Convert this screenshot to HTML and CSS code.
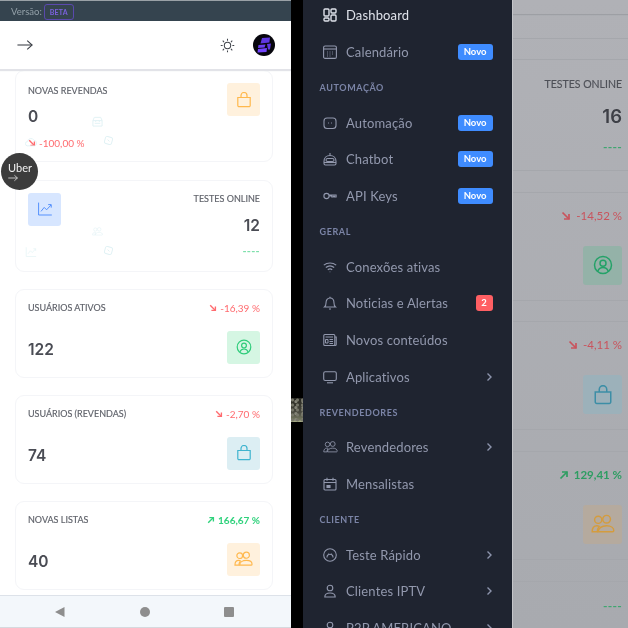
FILE: index.html
```html
<!DOCTYPE html>
<html lang="pt-BR">
<head>
<meta charset="utf-8">
<title>Dashboard</title>
<link rel="stylesheet" href="styles.css">
</head>
<body>
<svg class="defs" xmlns="http://www.w3.org/2000/svg">
  <symbol id="i-bag" viewBox="0 0 16 16"><path d="M1.800 5.500h12.400v8a1.200 1.200 0 0 1-1.200 1.200H3a1.200 1.200 0 0 1-1.200-1.200z"/><path d="M5 5.500V3.500a3 3 0 0 1 6 0v2"/></symbol>
  <symbol id="i-chart" viewBox="0 0 20 20"><path d="M2 2v15.500h16.500"/><path d="M5 13l4-5 3 3 5.500-6"/><path d="M14 4.500h3.800v3.800"/></symbol>
  <symbol id="i-usercircle" viewBox="0 0 16 16"><circle cx="8" cy="8" r="6.800"/><circle cx="8" cy="6.600" r="2.400"/><path d="M3.800 13c.8-2 2.400-3 4.200-3s3.400 1 4.200 3"/></symbol>
  <symbol id="i-users" viewBox="0 0 20 16"><circle cx="6" cy="4.500" r="3"/><circle cx="13" cy="4" r="3.200"/><path d="M1 14.500c0-3 1.500-5 4-5 .8 0 1.300.2 1.800.5-1 1.200-1.500 2.700-1.500 4.500z"/><path d="M6 14.500c0-3 3-5 7-5s6 2 6 4c0 .6-.4 1-1 1z"/></symbol>
  <symbol id="i-dash" viewBox="0 0 14 14"><rect x="1" y="1" width="5" height="7" rx="1"/><rect x="8" y="1" width="5" height="4" rx="1"/><rect x="1" y="10" width="5" height="3" rx="1"/><rect x="8" y="7" width="5" height="6" rx="1"/></symbol>
  <symbol id="i-cal" viewBox="0 0 14 14"><rect x=".6" y="1" width="12.800" height="12.400" rx="1.500"/><path d="M.6 4h12.800"/><path d="M4 7h.8M6.600 7h.8M9.200 7h.8M4 9h.8M6.600 9h.8M9.200 9h.8M4 11h.8M6.600 11h.8" stroke-width="1.200"/></symbol>
  <symbol id="i-bot" viewBox="0 0 14 14"><rect x="1" y="2" width="12" height="10.500" rx="3"/><path d="M5 7h.6M8.400 7h.6" stroke-width="1.500"/></symbol>
  <symbol id="i-chatbot" viewBox="0 0 14 14"><path d="M7 1v2"/><path d="M1 9.500C1 6 3.500 3.500 7 3.500s6 2.500 6 6v2a1.500 1.500 0 0 1-1.500 1.500h-9A1.500 1.500 0 0 1 1 11.500z"/><rect x="3" y="6.500" width="8" height="3" rx="1.500"/><path d="M1 10.500h12"/></symbol>
  <symbol id="i-key" viewBox="0 0 14 14"><circle cx="3.500" cy="7" r="2.600"/><path d="M6.100 6h7v2H11.500v-.8h-1.200V8H8.800v-1H6.100"/></symbol>
  <symbol id="i-wifi" viewBox="0 0 14 14"><path d="M.8 5.200C4.400 2.200 9.600 2.200 13.200 5.200"/><path d="M2.800 7.500c2.500-2 5.900-2 8.400 0"/><path d="M4.800 9.700c1.300-1 3.100-1 4.400 0"/><path d="M6.800 11.800h.4" stroke-width="1.500"/></symbol>
  <symbol id="i-bell" viewBox="0 0 14 14"><path d="M1.500 11c1-.8 1.500-2 1.500-4 0-3 1.500-5 4-5s4 2 4 5c0 2 .5 3.200 1.500 4z"/><path d="M6 13h2"/><path d="M7 .8v1.200"/></symbol>
  <symbol id="i-news" viewBox="0 0 14 14"><rect x=".8" y="1.500" width="11" height="11" rx="1"/><path d="M11.800 4h1.400v7.500a1 1 0 0 1-1 1h-1"/><path d="M2.500 4h7.500M2.500 6.500h2.500v3.500H2.500zM6.500 6.500H10M6.500 8.500H10M6.500 10.500H10" stroke-width="1"/></symbol>
  <symbol id="i-tv" viewBox="0 0 14 14"><rect x=".7" y="1.800" width="12.600" height="8.700" rx="1.500"/><path d="M4 12.800h6"/></symbol>
  <symbol id="i-cal2" viewBox="0 0 14 14"><rect x="1" y="2.500" width="12" height="10.500" rx="1"/><path d="M1 5.500h12M4 .8v3M10 .8v3"/><path d="M4 8.500h3v2H4z" fill="currentColor"/></symbol>
  <symbol id="i-smile" viewBox="0 0 14 14"><circle cx="7" cy="7" r="6.300"/><path d="M4 9.500c0-2 1.300-3.200 3-3.200s3 1.200 3 3.200"/><path d="M5 5.500h.4M8.600 5.500H9" stroke-width="1.200"/></symbol>
  <symbol id="i-user" viewBox="0 0 14 14"><circle cx="7" cy="4" r="2.800"/><path d="M1.800 13c0-2.800 2-4 5.200-4s5.200 1.200 5.200 4z"/></symbol>
  <symbol id="i-chev" viewBox="0 0 8 10"><path d="M2.500 1.500L6 5 2.500 8.500"/></symbol>
  <symbol id="i-down" viewBox="0 0 10 10"><path d="M1.500 1.500l6.500 6.500"/><path d="M8 3v5H3"/></symbol>
  <symbol id="i-up" viewBox="0 0 10 10"><path d="M1.500 8.500L8 2"/><path d="M3 2h5v5"/></symbol>
  <symbol id="i-arrow" viewBox="0 0 18 12"><path d="M.5 6h16.500"/><path d="M11.500 1l5.500 5-5.500 5"/></symbol>
  <symbol id="i-sun" viewBox="0 0 16 16"><circle cx="8" cy="8" r="3.400"/><path d="M8 .8v2M8 13.200v2M.8 8h2M13.200 8h2M2.900 2.900l1.400 1.400M11.700 11.700l1.400 1.400M2.900 13.100l1.400-1.400M11.700 4.300l1.400-1.400"/></symbol>
  <symbol id="i-shop" viewBox="0 0 12 12"><path d="M1 5l1.500-3.500h7L11 5v6H1z"/><path d="M1 5h10M4 5v1.500M8 5v1.500M3 8h6"/></symbol>
  <symbol id="i-cloud" viewBox="0 0 14 12"><path d="M3 10.500a2.500 2.500 0 0 1 0-5A4 4 0 0 1 10.500 4a3.300 3.300 0 0 1 .5 6.500z"/></symbol>
  <symbol id="i-puzzle" viewBox="0 0 12 12"><rect x="2" y="2" width="8" height="8" rx="2" transform="rotate(15 6 6)"/><path d="M5 5l2 2"/></symbol>
</svg>

<div class="screen">
  <section class="phone">
    <div class="status">
      <span class="status-version">Versão:</span>
      <span class="beta">BETA</span>
    </div>
    <header class="topbar">
      <svg class="topbar-arrow"><use href="#i-arrow"/></svg>
      <div class="topbar-right">
        <svg class="sun"><use href="#i-sun"/></svg>
        <svg class="avatar" viewBox="0 0 22 22"><circle cx="11" cy="11" r="11" fill="#07060d"/><path d="M9 4l8-.5-.6 5-8.900 1z" fill="#5f37e0"/><path d="M5.500 11l7-.5-.9 3-6.600.5z" fill="#6a3df0"/><path d="M5 15l9-1-.5 4-9 .5z" fill="#7344ff"/><path d="M14 10l4-.5-1 6-2 0z" fill="#5f37e0"/></svg>
      </div>
    </header>

    <main class="cards">
      <article class="card card-a">
        <div class="stack">
          <h3 class="label">Novas Revendas</h3>
          <div class="value value-mid">0</div>
          <div class="delta down"><svg class="delta-icon"><use href="#i-down"/></svg>-100,00 %</div>
        </div>
        <div class="box box-orange"><svg class="box-icon"><use href="#i-bag"/></svg></div>
        <svg class="ghost ghost-shop"><use href="#i-shop"/></svg>
        <svg class="ghost ghost-right"><use href="#i-puzzle"/></svg>
        <svg class="ghost ghost-left"><use href="#i-cloud"/></svg>
      </article>

      <article class="card card-b">
        <div class="box box-blue"><svg class="box-icon"><use href="#i-chart"/></svg></div>
        <div class="stack stack-end">
          <h3 class="label">Testes Online</h3>
          <div class="value value-mid">12</div>
          <div class="dashes">----</div>
        </div>
        <svg class="ghost ghost-shop"><use href="#i-users"/></svg>
        <svg class="ghost ghost-right"><use href="#i-puzzle"/></svg>
        <svg class="ghost ghost-left"><use href="#i-chart"/></svg>
      </article>

      <article class="card card-c">
        <div class="row">
          <h3 class="label">Usuários Ativos</h3>
          <div class="delta down"><svg class="delta-icon"><use href="#i-down"/></svg>-16,39 %</div>
        </div>
        <div class="row row-end">
          <div class="value">122</div>
          <div class="box box-green"><svg class="box-icon"><use href="#i-usercircle"/></svg></div>
        </div>
      </article>

      <article class="card card-c">
        <div class="row">
          <h3 class="label">Usuários (Revendas)</h3>
          <div class="delta down"><svg class="delta-icon"><use href="#i-down"/></svg>-2,70 %</div>
        </div>
        <div class="row row-end">
          <div class="value">74</div>
          <div class="box box-teal"><svg class="box-icon"><use href="#i-bag"/></svg></div>
        </div>
      </article>

      <article class="card card-c">
        <div class="row">
          <h3 class="label">Novas Listas</h3>
          <div class="delta up"><svg class="delta-icon"><use href="#i-up"/></svg>166,67 %</div>
        </div>
        <div class="row row-end">
          <div class="value">40</div>
          <div class="box box-orange"><svg class="box-icon box-icon-wide"><use href="#i-users"/></svg></div>
        </div>
      </article>
    </main>

    <nav class="softkeys">
      <svg class="softkey" viewBox="0 0 12 12"><path d="M10.500 1v10L1 6z"/></svg>
      <svg class="softkey" viewBox="0 0 12 12"><circle cx="6" cy="6" r="5"/></svg>
      <svg class="softkey" viewBox="0 0 12 12"><rect x="1" y="1" width="10" height="10" rx="1"/></svg>
    </nav>

    <div class="bubble">
      <span>Uber</span>
      <svg class="bubble-arrow"><use href="#i-arrow"/></svg>
    </div>
  </section>

  <div class="gap"><div class="gap-photo"></div></div>

  <aside class="sidebar">
    <a class="item item-active"><svg class="item-icon"><use href="#i-dash"/></svg><span class="item-text">Dashboard</span></a>
    <a class="item"><svg class="item-icon"><use href="#i-cal"/></svg><span class="item-text">Calendário</span><span class="tag">Novo</span></a>
    <div class="section">Automação</div>
    <a class="item"><svg class="item-icon"><use href="#i-bot"/></svg><span class="item-text">Automação</span><span class="tag">Novo</span></a>
    <a class="item"><svg class="item-icon"><use href="#i-chatbot"/></svg><span class="item-text">Chatbot</span><span class="tag">Novo</span></a>
    <a class="item"><svg class="item-icon"><use href="#i-key"/></svg><span class="item-text">API Keys</span><span class="tag">Novo</span></a>
    <div class="section">Geral</div>
    <a class="item"><svg class="item-icon"><use href="#i-wifi"/></svg><span class="item-text">Conexões ativas</span></a>
    <a class="item"><svg class="item-icon"><use href="#i-bell"/></svg><span class="item-text">Noticias e Alertas</span><span class="tag tag-red">2</span></a>
    <a class="item"><svg class="item-icon"><use href="#i-news"/></svg><span class="item-text">Novos conteúdos</span></a>
    <a class="item"><svg class="item-icon"><use href="#i-tv"/></svg><span class="item-text">Aplicativos</span><svg class="chev"><use href="#i-chev"/></svg></a>
    <div class="section">Revendedores</div>
    <a class="item"><svg class="item-icon item-icon-wide"><use href="#i-users"/></svg><span class="item-text">Revendedores</span><svg class="chev"><use href="#i-chev"/></svg></a>
    <a class="item"><svg class="item-icon"><use href="#i-cal2"/></svg><span class="item-text">Mensalistas</span></a>
    <div class="section">Cliente</div>
    <a class="item"><svg class="item-icon"><use href="#i-smile"/></svg><span class="item-text">Teste Rápido</span><svg class="chev"><use href="#i-chev"/></svg></a>
    <a class="item"><svg class="item-icon"><use href="#i-user"/></svg><span class="item-text">Clientes IPTV</span><svg class="chev"><use href="#i-chev"/></svg></a>
    <a class="item"><svg class="item-icon"><use href="#i-user"/></svg><span class="item-text">P2P AMERICANO</span><svg class="chev"><use href="#i-chev"/></svg></a>
  </aside>

  <section class="dimmed">
    <div class="dim-head"></div>
    <div class="dim-spacer"></div>
    <div class="dim-card dim-card-a">
      <h3 class="label">Testes Online</h3>
      <div class="value value-mid">16</div>
      <div class="dashes">----</div>
    </div>
    <div class="dim-card dim-card-b">
      <div class="delta down"><svg class="delta-icon"><use href="#i-down"/></svg>-14,52 %</div>
      <div class="box box-green"><svg class="box-icon"><use href="#i-usercircle"/></svg></div>
    </div>
    <div class="dim-card dim-card-b">
      <div class="delta down"><svg class="delta-icon"><use href="#i-down"/></svg>-4,11 %</div>
      <div class="box box-teal"><svg class="box-icon"><use href="#i-bag"/></svg></div>
    </div>
    <div class="dim-card dim-card-b">
      <div class="delta up"><svg class="delta-icon"><use href="#i-up"/></svg>129,41 %</div>
      <div class="box box-orange"><svg class="box-icon box-icon-wide"><use href="#i-users"/></svg></div>
    </div>
    <div class="dim-card dim-card-d">
      <div class="dashes">----</div>
    </div>
  </section>
</div>
</body>
</html>
```
FILE: styles.css
```css
* { box-sizing: border-box; }
html, body { margin: 0; height: 100%; overflow: hidden; background: #000; }
body { font-family: "Lato", "Noto Sans", sans-serif; }
h3 { margin: 0; }
.defs { display: none; }

.screen {
  display: flex;
  width: 628px;
  height: 628px;
  overflow: hidden;
  filter: blur(0.4px);
}

/* left phone */
.phone {
  position: relative;
  flex: 0 0 291px;
  height: 628px;
  background: #fff;
  display: flex;
  flex-direction: column;
  overflow: hidden;
}
.status {
  flex: 0 0 21px;
  display: flex;
  align-items: center;
  gap: 2px;
  padding: 1px 0 0 11px;
  background: #35444f;
  border-top: 1px solid #9aa1a6;
}
.status-version { font-size: 9.500px; color: #93a0a8; }
.beta {
  font-size: 7px;
  font-weight: 700;
  letter-spacing: .2px;
  color: #7c62e0;
  border: 1px solid #5a49ad;
  border-radius: 3px;
  padding: 2px 5px;
  line-height: 10px;
}
.topbar {
  flex: 0 0 48px;
  display: flex;
  align-items: center;
  justify-content: space-between;
  padding: 0 16px 0 17px;
  background: #fff;
  box-shadow: 0 2px 1px #e2e3e8;
  position: relative;
  z-index: 1;
}
.topbar-arrow { width: 16px; height: 12px; fill: none; stroke: #3b3f46; stroke-width: 1.200; }
.topbar-right { display: flex; align-items: center; gap: 18px; }
.sun { width: 15px; height: 15px; fill: none; stroke: #3f434a; stroke-width: 1.100; }
.avatar { width: 22px; height: 22px; }

.cards {
  flex: 1;
  display: flex;
  flex-direction: column;
  gap: 17.500px;
  padding: 1px 18px 0 15px;
  overflow: hidden;
}
.card {
  position: relative;
  flex: none;
  background: #fff;
  border: 1px solid #f4f5f8;
  border-radius: 9px;
  padding: 12px;
}
.card-a, .card-b {
  height: 92px;
  display: flex;
  justify-content: space-between;
  align-items: flex-start;
}
.card-c {
  height: 88.500px;
  display: flex;
  flex-direction: column;
  justify-content: space-between;
  padding: 11px 12px 13px;
}
.stack { display: flex; flex-direction: column; align-items: flex-start; }
.stack-end { align-items: flex-end; }
.row { display: flex; justify-content: space-between; align-items: center; }
.row-end { align-items: flex-end; }

.label {
  font-size: 9px;
  font-weight: 400;
  line-height: 12px;
  text-transform: uppercase;
  color: #5f626a;
  white-space: nowrap;
  -webkit-text-stroke: 0.15px #5f626a;
}
.card-a .label { margin-top: 2px; }
.card-b .label { margin-top: 0; }
.value {
  font-family: "Inter", "Lato", sans-serif;
  font-size: 15.500px;
  font-weight: 600;
  line-height: 22px;
  color: #4a4c54;
  margin-bottom: 3px;
}
.value-mid { margin-top: 9px; margin-bottom: 0; }
.card-b .value-mid { margin-top: 10px; }
.delta {
  display: flex;
  align-items: center;
  gap: 3px;
  font-size: 10px;
  line-height: 14px;
  white-space: nowrap;
}
.card-a .delta { margin-top: 8px; }
.down { color: #ff6b6f; }
.up { color: #2fd27c; font-weight: 700; }
.delta-icon { width: 8px; height: 8px; fill: none; stroke: currentColor; stroke-width: 1.700; }
.dashes {
  font-size: 11px;
  font-weight: 700;
  line-height: 14px;
  color: #7fe0ac;
  letter-spacing: .3px;
  margin-top: 7px;
}

.box {
  flex: none;
  width: 33px;
  height: 33px;
  border-radius: 3px;
  display: flex;
  align-items: center;
  justify-content: center;
}
.box-icon { width: 16px; height: 16px; fill: none; stroke: currentColor; stroke-width: 1.200; }
.box-icon-wide { width: 19px; height: 16px; }
.box-orange { background: #fff1dd; color: #ffb84d; }
.box-blue { background: #d7e6ff; color: #4f8dfd; }
.box-green { background: #d5f6e3; color: #2ecc7a; }
.box-teal { background: #dceef3; color: #3fb4cf; }

.ghost { position: absolute; width: 11px; height: 11px; fill: none; stroke: #dff1f4; stroke-width: 1; }
.ghost-shop { left: 76px; top: 45px; }
.ghost-right { left: 87px; top: 64px; }
.ghost-left { left: 9px; top: 65px; width: 12px; height: 12px; }

.softkeys {
  flex: 0 0 33px;
  display: flex;
  align-items: center;
  justify-content: space-between;
  padding: 0 56px 0 54px;
  background: #f3f7fb;
  border-top: 1px solid #dde2e9;
  border-bottom: 1px solid #d5d9de;
}
.softkey { width: 12px; height: 12px; fill: #8e8e8e; }

.bubble {
  position: absolute;
  left: 1px;
  top: 153px;
  width: 37px;
  height: 37px;
  border-radius: 50%;
  background: #3c3c3c;
  color: #f2f2f2;
  font-size: 11px;
  line-height: 13px;
  padding: 8px 0 0 7px;
}
.bubble span { display: block; }
.bubble-arrow { display: block; width: 10px; height: 8px; fill: none; stroke: #f2f2f2; stroke-width: 1.300; margin-top: 0; }

/* black gap */
.gap { flex: 0 0 12px; background: #000; padding-top: 398px; }
.gap-photo {
  height: 24px;
  background:
    radial-gradient(circle at 30% 40%, #77776a 0 1px, transparent 2px),
    radial-gradient(circle at 70% 60%, #86867a 0 1px, transparent 2px),
    linear-gradient(#26261f, #4a4a40 60%, #74785f 90%, #b0b58c);
  background-size: 5px 5px, 7px 6px, 100% 100%;
}

/* sidebar */
.sidebar {
  flex: 0 0 208.500px;
  height: 640px;
  margin-top: -3px;
  background: #1f2430;
  display: flex;
  flex-direction: column;
}
.item {
  flex: 0 0 36.800px;
  display: flex;
  align-items: center;
  padding: 0 19px 0 20px;
  color: #9298ad;
  font-size: 13px;
}
.item-active { color: #dfe2ea; }
.item-icon {
  flex: none;
  width: 14px;
  height: 14px;
  margin-right: 9px;
  fill: none;
  stroke: currentColor;
  stroke-width: 1.100;
}
.item-icon-wide { width: 15px; margin-right: 8px; }
.item-active .item-icon { stroke-width: 1.400; }
.item-text { flex: 1; white-space: nowrap; letter-spacing: .15px; }
.tag {
  flex: none;
  height: 16px;
  min-width: 33px;
  padding: 0 6px;
  border-radius: 3px;
  background: #3f8cff;
  color: #fff;
  font-size: 9.500px;
  font-weight: 700;
  line-height: 16px;
  text-align: center;
}
.tag-red { background: #ff5f63; min-width: 17px; padding: 0 4px; }
.chev { flex: none; width: 8px; height: 10px; fill: none; stroke: #8d94ac; stroke-width: 1.400; }
.section {
  flex: 0 0 33.600px;
  display: flex;
  align-items: center;
  padding-left: 16.500px;
  font-size: 9px;
  font-weight: 700;
  letter-spacing: .6px;
  text-transform: uppercase;
  color: #7b84a6;
}

/* dimmed right page */
.dimmed {
  flex: 1;
  height: 628px;
  background: linear-gradient(#b0b1b6, #a8aaaf);
  border-left: 1px solid #c4c5c9;
  display: flex;
  flex-direction: column;
  color: #44464d;
  overflow: hidden;
}
.dimmed .label { font-size: 10.500px; color: #4f5158; -webkit-text-stroke: 0.15px #4f5158; }
.dimmed .value { font-size: 18.500px; color: #3d3f46; }
.dimmed .delta { font-size: 11.500px; color: #c9545d; gap: 5px; }
.dimmed .up { color: #2e9d62; }
.dimmed .delta-icon { width: 10px; height: 10px; }
.dimmed .dashes { color: #3fa670; font-size: 12px; margin-top: 0; }
.dimmed .box { width: 39px; height: 39px; }
.dimmed .box-icon { width: 20px; height: 20px; }
.dimmed .box-icon-wide { width: 24px; height: 20px; }
.dimmed .box-green { background: #94b2a8; color: #24a268; }
.dimmed .box-teal { background: #9cb1ba; color: #3c8ea6; }
.dimmed .box-orange { background: #b5aa9e; color: #d49c3e; }
.dim-head { flex: 0 0 14px; box-shadow: 0 1px 1px #9d9fa4; }
.dim-spacer { flex: 0 0 25px; border-bottom: 1px solid #a5a7ac; }
.dim-card {
  margin-top: 20px;
  padding-right: 6px;
  display: flex;
  flex-direction: column;
  align-items: flex-end;
  border-top: 1px solid #a5a7ac;
  border-bottom: 1px solid #a5a7ac;
  flex: none;
}
.dim-card-a { height: 112px; padding-top: 18px; }
.dimmed .dim-card-a .value-mid { margin-top: 15px; }
.dimmed .dim-card-a .dashes { margin-top: 13px; }
.dim-card-b { height: 109px; margin-top: 20.670px; padding-top: 16px; gap: 23px; }
.dim-card-d { height: 60px; margin-top: 20.670px; padding-top: 17px; }
```
